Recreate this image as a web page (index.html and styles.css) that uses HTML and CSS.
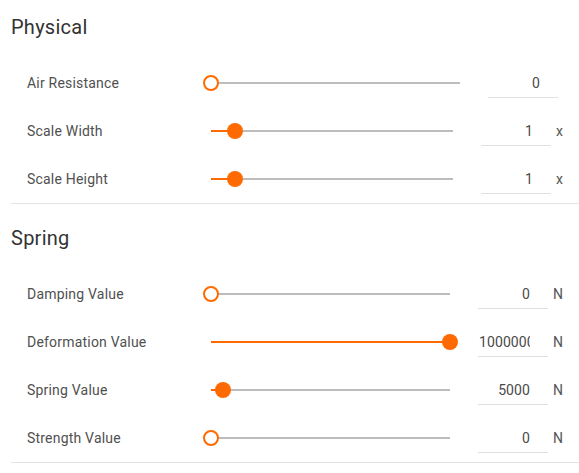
FILE: index.html
```html
<!DOCTYPE html>
<html>
<head>
<meta charset="utf-8">
<link rel="stylesheet" href="styles.css">
</head>
<body>
<div class="panel">
  <section class="section first">
    <h2 class="title">Physical</h2>
    <div class="row">
      <span class="label">Air Resistance</span>
      <div class="slider"><div class="track"><div class="fill" style="width:0%"></div><div class="thumb empty" style="left:0%"></div></div></div>
      <input class="value" type="text" value="0">
      <span class="unit"></span>
    </div>
    <div class="row">
      <span class="label">Scale Width</span>
      <div class="slider"><div class="track"><div class="fill" style="width:10%"></div><div class="thumb" style="left:10%"></div></div></div>
      <input class="value" type="text" value="1">
      <span class="unit">x</span>
    </div>
    <div class="row">
      <span class="label">Scale Height</span>
      <div class="slider"><div class="track"><div class="fill" style="width:10%"></div><div class="thumb" style="left:10%"></div></div></div>
      <input class="value" type="text" value="1">
      <span class="unit">x</span>
    </div>
  </section>
  <section class="section">
    <h2 class="title">Spring</h2>
    <div class="row">
      <span class="label">Damping Value</span>
      <div class="slider"><div class="track"><div class="fill" style="width:0%"></div><div class="thumb empty" style="left:0%"></div></div></div>
      <input class="value" type="text" value="0">
      <span class="unit">N</span>
    </div>
    <div class="row">
      <span class="label">Deformation Value</span>
      <div class="slider"><div class="track"><div class="fill" style="width:100%"></div><div class="thumb" style="left:100%"></div></div></div>
      <input class="value" type="text" value="1000000">
      <span class="unit">N</span>
    </div>
    <div class="row">
      <span class="label">Spring Value</span>
      <div class="slider"><div class="track"><div class="fill" style="width:5%"></div><div class="thumb" style="left:5%"></div></div></div>
      <input class="value" type="text" value="5000">
      <span class="unit">N</span>
    </div>
    <div class="row">
      <span class="label">Strength Value</span>
      <div class="slider"><div class="track"><div class="fill" style="width:0%"></div><div class="thumb empty" style="left:0%"></div></div></div>
      <input class="value" type="text" value="0">
      <span class="unit">N</span>
    </div>
  </section>
</div>
</body>
</html>
```

FILE: styles.css
```css
html, body {
  margin: 0;
  padding: 0;
  background: #ffffff;
}
body {
  font-family: Roboto, "Liberation Sans", sans-serif;
  color: #444;
}
.panel {
  padding-left: 11px;
}
.section {
  border-bottom: 1px solid #e3e3e3;
}
.title {
  margin: 22px 0 20px 0;
  height: 24px;
  line-height: 24px;
  font-size: 20px;
  font-weight: 400;
  letter-spacing: 0.25px;
  color: #333;
}
.first .title {
  margin-top: 15px;
}
.row {
  display: flex;
  align-items: center;
  height: 48px;
  padding: 0 16px 0 16px;
}
.label {
  width: 176px;
  flex: none;
  font-size: 14px;
  line-height: 16px;
  letter-spacing: 0.2px;
  color: #505050;
}
.slider {
  flex: 1;
  padding: 0 8px;
  height: 48px;
  display: flex;
  align-items: center;
}
.track {
  position: relative;
  width: 100%;
  height: 2px;
  background: #bdbdbd;
}
.fill {
  position: absolute;
  left: 0;
  top: 0;
  height: 2px;
  background: #ff6a00;
}
.thumb {
  position: absolute;
  top: 1px;
  width: 16px;
  height: 16px;
  box-sizing: border-box;
  border-radius: 50%;
  background: #ff6a00;
  transform: translate(-50%, -50%);
}
.thumb.empty {
  background: #ffffff;
  border: 2px solid #ff6a00;
}
.value {
  flex: none;
  width: 70px;
  height: 29px;
  box-sizing: border-box;
  margin: 0 0 0 20px;
  padding: 0 18px 0 1px;
  border: none;
  border-bottom: 1px solid #e0e0e0;
  outline: none;
  background: transparent;
  font-family: Roboto, "Liberation Sans", sans-serif;
  font-size: 14px;
  letter-spacing: 0.1px;
  color: #4a4a4a;
  text-align: right;
}
.unit {
  flex: none;
  margin-left: 5px;
  font-size: 14px;
  line-height: 16px;
  color: #555;
}
```
